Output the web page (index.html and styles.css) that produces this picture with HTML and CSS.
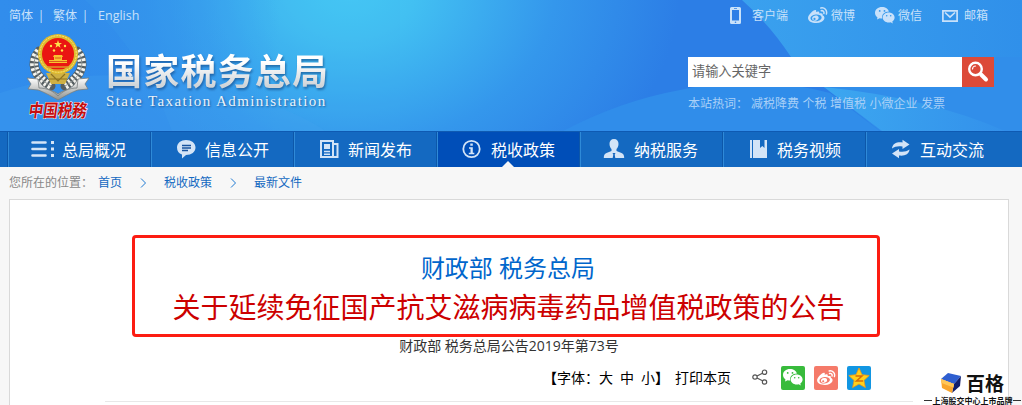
FILE: index.html
```html
<!DOCTYPE html>
<html lang="zh-CN">
  <head>
    <meta charset="utf-8" />
    <title>国家税务总局</title>
    <link rel="stylesheet" href="styles.css">
  </head>
  <body>
    <!-- shared icons -->
    <svg class="sprite" width="0" height="0">
      <symbol id="wechat" viewBox="0 0 20 17">
        <path fill="currentColor" fill-rule="evenodd" d="M7 0C3 0 0 2.600 0 5.900c0 1.900 1 3.400 2.500 4.500L2 12.600l2.600-1.300c.9.200 1.700.3 2.700.3C6.300 7.600 9.500 4.600 14 4.600 13.300 1.900 10.500 0 7 0zM4.700 3a.9.900 0 1 1 0 1.800.9.900 0 0 1 0-1.800zm4.800 0a.9.900 0 1 1 0 1.800.9.900 0 0 1 0-1.800z" />
        <path fill="currentColor" fill-rule="evenodd" d="M13.700 5.500c-3.400 0-6 2.200-6 5s2.600 5 6 5c.7 0 1.400-.1 2-.3l2.100 1.200-.5-1.900c1.400-.9 2.300-2.300 2.300-4 0-2.800-2.600-5-5.900-5zM11.700 8a.8.800 0 1 1 0 1.600.8.800 0 0 1 0-1.600zm4 0a.8.800 0 1 1 0 1.600.8.800 0 0 1 0-1.600z" />
      </symbol>
      <symbol id="weibo" viewBox="0 0 20 17">
        <path fill="currentColor" fill-rule="evenodd" d="M8 5c1.500-.8 3.900-1 3.300 1.600 2.200-.8 4-.2 3.300 1.700 4 1.600 1.500 7.700-6.200 7.700C3.500 16 0 14 0 11 0 7.500 6.500 1.500 8 3.200c.4.500.3 1.100 0 1.800zM7.800 7.500C4.500 7.800 2.300 9.600 2.500 11.600c.2 1.900 2.700 3 5.800 2.700s5.500-2.100 5.300-4.100c-.2-1.900-2.700-3-5.800-2.700z" />
        <path fill="currentColor" fill-rule="evenodd" d="M7.500 8.600c-2.300.2-3.800 1.800-3.300 3.400.4 1.500 2.400 2.100 4.200 1.400 1.900-.7 2.800-2.400 2-3.700-.5-.8-1.600-1.200-2.900-1.100zM6.500 10.800a1.100 1.100 0 1 1 0 2.200 1.100 1.100 0 0 1 0-2.200z" />
        <path fill="none" stroke="currentColor" stroke-width="1.500" stroke-linecap="round" d="M12.800 1c3.700-.8 6.700 2.300 5.600 6M13.200 3.700c1.800-.4 3.200 1 2.700 2.800" />
      </symbol>
    </svg>

    <div class="header">
      <svg class="header-bg" viewBox="0 0 1022 131" preserveAspectRatio="none">
        <defs>
          <radialGradient id="glow" gradientUnits="userSpaceOnUse" cx="0" cy="0" r="1" gradientTransform="translate(350 -12) scale(330 255)">
            <stop offset="0" stop-color="#46cbf5" />
            <stop offset=".2" stop-color="#42c0f2" />
            <stop offset=".62" stop-color="#3497ec" />
            <stop offset="1" stop-color="#2c7ee6" />
          </radialGradient>
          <linearGradient id="leftTint" x1="0" x2="1">
            <stop offset="0" stop-color="#318dec" />
            <stop offset=".35" stop-color="#318dec" stop-opacity=".8" />
            <stop offset="1" stop-color="#318dec" stop-opacity="0" />
          </linearGradient>
          <linearGradient id="beam" x1="0" x2="1">
            <stop offset="0" stop-color="#3aa1ee" />
            <stop offset="1" stop-color="#3090ea" />
          </linearGradient>
          <linearGradient id="facet" x1="0" x2="1">
            <stop offset="0" stop-color="#3ca7f0" />
            <stop offset="1" stop-color="#3391eb" />
          </linearGradient>
        </defs>
        <rect width="1022" height="131" fill="url(#glow)" />
        <rect width="280" height="131" fill="url(#leftTint)" />
        <path d="M85 0H400V131H172Q145 55 85 0z" fill="#42b0f0" opacity=".12" />
        <path d="M0 93Q90 62 200 85Q290 105 325 131H0z" fill="#42a5ef" opacity=".25" />
        <path d="M563 131Q620 101 680 90Q755 73 830 93L880 131z" fill="#308dea" />
        <path d="M742 0H1022V131H900L824 87L791 57Q770 25 742 0z" fill="url(#beam)" />
        <path d="M791 57H1022V131H880L824 87z" fill="#318eea" />
        <path d="M824 87Q930 98 1005 131H882z" fill="url(#facet)" />
      </svg>

      <div class="topbar">
        <div class="lang">
          <a>简体</a><i>|</i><a>繁体</a><i>|</i><a class="eng">English</a>
        </div>
        <div class="top-links">
          <a class="client">
            <svg width="12" height="18" viewBox="0 0 12 18"><path fill="currentColor" fill-rule="evenodd" d="M1.500 0h8A1.500 1.500 0 0 1 11 1.500v14a1.500 1.500 0 0 1-1.500 1.500h-8A1.500 1.500 0 0 1 0 15.500v-14A1.500 1.500 0 0 1 1.500 0zM2 3v10.500h7V3zM4 1.200v.7h3v-.7zM5.500 14.500a.8.800 0 1 0 0 1.600.8.800 0 0 0 0-1.600z" /></svg>
            客户端
          </a>
          <a class="weibo"><svg width="20" height="17"><use href="#weibo" /></svg>微博</a>
          <a class="wechat"><svg width="20" height="17"><use href="#wechat" /></svg>微信</a>
          <a class="mail">
            <svg width="16" height="12" viewBox="0 0 16 12"><path fill="none" stroke="currentColor" stroke-width="1.700" d="M.9.9h14.200v10.200H.9zM3 2.500l5 4.700 5-4.700" /></svg>
            邮箱
          </a>
        </div>
      </div>

      <div class="banner">
        <div class="brand">
          <svg class="emblem" width="66" height="96" viewBox="0 0 66 96">
            <defs>
              <linearGradient id="silver" x1="0" x2="0" y1="0" y2="1">
                <stop offset="0" stop-color="#fff" />
                <stop offset="1" stop-color="#8d918f" />
              </linearGradient>
            </defs>
            <!-- wheat -->
            <g fill="none" stroke-linecap="round">
              <path d="M14 18C5 29 8 43 26 53M52 18c9 11 6 25-12 35" stroke="#555e61" stroke-width="9" />
              <path d="M14 18C5 29 8 43 26 53M52 18c9 11 6 25-12 35" stroke="#f3f3ee" stroke-width="8" stroke-dasharray="2.500 2" stroke-linecap="butt" />
              <path d="M14 18C5 29 8 43 26 53M52 18c9 11 6 25-12 35" stroke="#8b9191" stroke-width="1" />
            </g>
            <path d="M21 40h24l-5 11H26z" fill="#cdb045" />
            <path d="M26 41l7 7 7-7M24 46h18" stroke="#8e7320" stroke-width="1.200" fill="none" />
            <!-- ribbon -->
            <path d="M2 45l11 1 4 6c7 6 11 5 16 9 5-4 9-3 16-9l4-6 11-1-4 6 3 5-10 1C47 59 42 62 33 67 24 62 19 59 13 57L3 56l3-5z" fill="url(#silver)" stroke="#777d7e" stroke-width=".8" />
            <path d="M13 46l1 9c8 0 14 3 19 8 5-5 11-8 19-8l1-9" fill="none" stroke="#777d7e" stroke-width=".8" />
            <circle cx="33" cy="21" r="20" fill="#dfba2c" />
            <circle cx="33" cy="21" r="18.300" fill="none" stroke="#fae783" stroke-width="1" stroke-dasharray="2 1" />
            <circle cx="33" cy="21" r="16" fill="#ea1512" />
            <g fill="#ffe34c">
              <path d="M33 7l1 3h3l-2.400 1.800.9 3L33 13l-2.500 1.800.9-3L29 10h3z" />
              <circle cx="26" cy="13" r="1.200" /><circle cx="40" cy="13" r="1.200" />
              <circle cx="29" cy="17.500" r="1.200" /><circle cx="37" cy="17.500" r="1.200" />
            </g>
            <path d="M29 22h8l1 2h-1v3h5v3H24v-3h5v-3h-1z" fill="#f9c32f" />
            <path d="M24 28.500h18M30 25h6" stroke="#db5b1d" stroke-width="1" />
            <path d="M22 34h22M28 37h10" stroke="#e0982a" stroke-width="1.600" />
            <text class="script" transform="translate(3 84) skewX(-8)" textLength="58" lengthAdjust="spacingAndGlyphs">中国税務</text>
          </svg>
          <div class="brand-name">
            <div class="cn">国家税务总局</div>
            <div class="en">State Taxation Administration</div>
          </div>
        </div>

        <div class="search">
          <div class="search-box">
            <div class="field">请输入关键字</div>
            <div class="search-btn">
              <svg width="22" height="22" viewBox="0 0 22 22" fill="none" stroke="#fff" stroke-linecap="round"><circle cx="8.500" cy="8" r="6.300" stroke-width="2.400" /><path d="M5.500 8a3 3 0 0 1 3-3" stroke-width="1.200" /><path d="M14 13.500l5 5" stroke-width="4" /></svg>
            </div>
          </div>
          <div class="hot"><span>本站热词：</span><a>减税降费</a><a>个税</a><a>增值税</a><a>小微企业</a><a>发票</a></div>
        </div>
      </div>
    </div>

    <div class="nav">
      <a><svg viewBox="0 0 24 20"><path fill="none" stroke="currentColor" stroke-width="2.600" stroke-linecap="round" d="M1.500 3.500h13M1.500 10h13M1.500 16.500h13" /><path fill="currentColor" d="M20 2h3v3h-3zM20 8.500h3v3h-3zM20 15h3v3h-3z" /></svg>总局概况</a>
      <a><svg viewBox="0 0 24 20"><path fill="currentColor" d="M12 1c5.500 0 9.500 3 9.500 7.500S17.500 16 12 16l-4 3.500V15.500C4.800 14.500 3 12 3 8.500 3 4 7 1 12 1z" /><path stroke="#17539f" stroke-width="1.300" d="M8 6.500h9M8 9h9M8 11.500h6" /></svg>信息公开</a>
      <a><svg viewBox="0 0 24 20"><path fill="none" stroke="currentColor" stroke-width="2" d="M4 2h12v16H4zM16 5h4.500v13H15" /><path fill="currentColor" d="M7 5h6v5H7zM7 11.700h6v1.500H7zM7 14.600h6v1.400H7z" /></svg>新闻发布</a>
      <a class="active"><svg viewBox="0 0 24 20"><circle cx="11.500" cy="10" r="8.200" fill="none" stroke="currentColor" stroke-width="1.800" /><path fill="currentColor" d="M10.300 4.500h2.500v2.300h-2.500zM9 8.300h3.800v5.500h1.500v1.500H8.800v-1.500h1.700v-4H9z" /></svg>税收政策</a>
      <a><svg viewBox="0 0 24 20"><path fill="currentColor" d="M11 0c3 0 4.600 2 4.500 5-.1 2.500-1 4-2 5v2l5 2c2 .8 2.700 2.500 2.700 5H.8c0-2.500.7-4.200 2.700-5l5-2v-2c-1-1-1.900-2.500-2-5C6.400 2 8 0 11 0z" /><path fill="#1465bd" d="M9.500 14h3l-.8 1.500.6 3.500h-2.600l.6-3.500z" /></svg>纳税服务</a>
      <a><svg viewBox="0 0 24 20"><path fill="currentColor" d="M4 1h2v18H4zM7 1h7v8l2.300-2L18.500 9V1H21v18H7z" /></svg>税务视频</a>
      <a><svg viewBox="0 0 24 20"><path fill="currentColor" d="M3 9.500C3.500 4.500 8 2.800 13.500 3.500V.8l7 4.700-7 4.500V7.500C9 6.800 6 7.500 3 9.500zM20.500 10.500c-.5 5-5 6.700-10.500 6v2.700l-7-4.700L10 10v2.500c4.500.7 7.500 0 10.500-2z" /></svg>互动交流</a>
    </div>

    <div class="crumbs">
      <span>您所在的位置：</span>
      <a>首页</a>
      <svg width="7" height="10"><path d="M1 .5L5.500 5 1 9.500" /></svg>
      <a>税收政策</a>
      <svg width="7" height="10"><path d="M1 .5L5.500 5 1 9.500" /></svg>
      <a>最新文件</a>
    </div>

    <div class="article">
      <div class="title-box">
        <div class="issuer">财政部 税务总局</div>
        <div class="title">关于延续免征国产抗艾滋病病毒药品增值税政策的公告</div>
      </div>
      <div class="doc-no">财政部 税务总局公告2019年第73号</div>
      <div class="tools">
        <div class="font-size"><b>【</b>字体：<a>大</a><a>中</a><a>小</a><b>】</b></div>
        <a class="print">打印本页</a>
        <svg class="share" width="17" height="17" viewBox="0 0 17 17"><path d="M5 7l6-3M5 9l6 3" /><circle cx="3" cy="8" r="2.200" /><circle cx="12.500" cy="3.200" r="2.200" /><circle cx="12.500" cy="13" r="2.200" /></svg>
        <div class="share-btn green"><svg width="20" height="17"><use href="#wechat" /></svg></div>
        <div class="share-btn red"><svg width="19" height="16"><use href="#weibo" /></svg></div>
        <div class="share-btn blue">
          <svg width="24" height="24" viewBox="0 0 24 24"><path d="M12 2l3 6.700 7.200.8-5.300 4.900 1.500 7.200L12 18l-6.400 3.600 1.500-7.200L1.800 9.500 9 8.700z" fill="#ffd11c" stroke="#f39a13" stroke-width=".8" /><path d="M8.500 10h6.500l-5.500 5h6.500" fill="none" stroke="#d56b0b" stroke-width="1.500" /></svg>
        </div>
      </div>
    </div>

    <div class="watermark">
      <div class="wm-logo">
        <svg width="22" height="22" viewBox="0 0 22 22"><path d="M8 1l13 3-7 8L1 7z" fill="#2f5fd0" /><path d="M21 4l-1 10-8 7 2-9z" fill="#101e6c" /><path d="M1 7l13 5-2 9-10-5z" fill="#f9a52c" /><path d="M1 7l13 5-.7 3.500L1.500 11z" fill="#ffc657" /></svg>
        <span>百格</span>
      </div>
      <div class="wm-text">上海股交中心上市品牌</div>
    </div>
  </body>
</html>
```
FILE: styles.css
```css
* {
  box-sizing: border-box;
}
body {
  margin: 0;
  height: 405px;
  overflow: hidden;
  display: flex;
  flex-direction: column;
  background: #f7f7f7;
  font-family: "Open Sans", "Noto Sans CJK SC", sans-serif;
  font-size: 12px;
  line-height: 18px;
  position: relative;
}
svg {
  display: block;
  flex: none;
}
.sprite {
  position: absolute;
}

/* header */
.header {
  height: 131px;
  flex: none;
  position: relative;
  z-index: 0;
  background: #318dea;
}
.header-bg {
  position: absolute;
  z-index: -1;
  left: 0;
  top: 0;
  width: 100%;
  height: 131px;
}
.topbar {
  height: 31px;
  padding: 0 33px 0 9px;
  display: flex;
  justify-content: space-between;
  align-items: center;
  color: #c8e1fa;
}
.lang {
  display: flex;
}
.lang i {
  font-style: normal;
  width: 20px;
  text-align: center;
  padding-right: 4px;
}
.lang .eng {
  font-size: 12.500px;
  margin-left: 1px;
}
.top-links {
  display: flex;
}
.top-links a {
  display: flex;
  align-items: center;
  gap: 3px;
}
.top-links .client {
  gap: 10px;
}
.top-links .weibo {
  margin-left: 20px;
}
.top-links .wechat {
  margin-left: 20px;
}
.top-links .mail {
  margin-left: 20px;
  gap: 6px;
  margin-right: 1px;
}
.banner {
  display: flex;
  justify-content: space-between;
  padding: 0 28px 0 25px;
}
.brand {
  display: flex;
}
.emblem {
  margin-top: 2px;
}
.script {
  font: 700 18px "Noto Sans CJK SC", sans-serif;
  fill: #c60d0f;
  stroke: #fff;
  stroke-width: 1px;
  paint-order: stroke;
}
.brand-name {
  padding: 15px 0 0 15px;
}
.cn {
  font: 700 36px/47px "Noto Sans CJK SC", sans-serif;
  letter-spacing: 1.2px;
  white-space: nowrap;
  background: linear-gradient(#fff 35%, #cfd4d8 85%);
  -webkit-background-clip: text;
  background-clip: text;
  color: transparent;
  filter: drop-shadow(1px 2px 1px rgba(20, 70, 130, 0.6));
}
.en {
  font: 15px/17px "Liberation Serif", serif;
  letter-spacing: 1.42px;
  white-space: nowrap;
  color: #e9f2fa;
  text-shadow: 1px 1px 2px #1b5d9f;
}
.search {
  padding-top: 26px;
}
.search-box {
  display: flex;
  height: 30px;
  width: 306px;
}
.field {
  flex: 1;
  background: #fff;
  color: #666;
  font-size: 13.200px;
  line-height: 28px;
  padding-left: 4px;
}
.search-btn {
  width: 32px;
  background: #dc4a38;
  display: flex;
  align-items: center;
  justify-content: center;
}
.hot {
  display: flex;
  gap: 3.500px;
  margin-top: 8px;
  color: #a9d0f7;
  white-space: nowrap;
}
.hot span {
  width: 59.500px;
}

/* main menu */
.nav {
  display: flex;
  height: 36px;
  flex: none;
  padding-left: 8px;
  background: #1469c1;
  border-top: 1px solid #0f5ab2;
}
.nav a {
  width: 143px;
  height: 35px;
  display: flex;
  align-items: center;
  gap: 7px;
  padding: 1px 0 0 22px;
  border-left: 1px solid #2f8ad8;
  box-shadow: -1px 0 #0d57a9;
  color: #fff;
  font-size: 16px;
  position: relative;
}
.nav svg {
  width: 24px;
  height: 20px;
  color: #d3e4f7;
  margin-top: -3px;
}
.nav .active {
  background: #004eb8;
}
.nav .active::after {
  content: "";
  position: absolute;
  left: 64px;
  bottom: 0;
  border: 6px solid transparent;
  border-top: 0;
  border-bottom-color: #f7f7f7;
}

.crumbs {
  height: 32px;
  flex: none;
  display: flex;
  align-items: center;
  padding-left: 9px;
  color: #888;
}
.crumbs span {
  width: 89px;
}
.crumbs a {
  color: #1469c1;
}
.crumbs svg {
  margin: 0 17px 0 18px;
  fill: none;
  stroke: #1c79d2;
}

/* article */
.article {
  width: 1000px;
  flex: 1;
  margin-left: 9px;
  padding-top: 35px;
  border: 1px solid #d9d9d9;
  border-bottom: 0;
  background: #fff;
}
.title-box {
  width: 748px;
  height: 102px;
  margin-left: 122px;
  padding-top: 12px;
  border: 3px solid #fc1c12;
  border-radius: 4px;
  text-align: center;
  white-space: nowrap;
}
.issuer {
  font-size: 24px;
  line-height: 36px;
  padding-left: 4px;
  color: #06c;
}
.title {
  font-size: 28px;
  line-height: 42px;
  padding-left: 5px;
  color: #c00;
}
.doc-no {
  width: 748px;
  margin-left: 125px;
  font-size: 14px;
  line-height: 18px;
  text-align: center;
  color: #333;
}
.tools {
  width: 808px;
  height: 47px;
  margin-left: 95px;
  padding: 0 42px 1px 0;
  border-bottom: 1px solid #e8e8e8;
  display: flex;
  align-items: center;
  justify-content: flex-end;
  font-size: 14px;
  color: #000;
}
.font-size {
  display: flex;
}
.font-size a {
  width: 21px;
}
.font-size a:nth-of-type(3) {
  width: 14px;
}
.print {
  margin: 0 21px 0 6px;
}
.share {
  fill: none;
  stroke: #555;
  stroke-width: 1.200;
  margin-right: 12px;
}
.share-btn {
  width: 24px;
  height: 24px;
  border-radius: 2px;
  display: flex;
  align-items: center;
  justify-content: center;
  color: #fff;
}
.share-btn + .share-btn {
  margin-left: 9px;
}
.green {
  background: #38bb3c;
}
.red {
  background: #f57a69;
}
.blue {
  background: #1296e2;
  margin-top: 1px;
}

/* corner badge */
.watermark {
  position: absolute;
  right: 1px;
  bottom: 0;
  width: 97px;
  color: #111;
}
.wm-logo {
  display: flex;
  align-items: center;
  gap: 4px;
  padding-left: 16px;
  height: 22px;
  font: bold 19px/22px "Noto Sans CJK SC", sans-serif;
}
.wm-text {
  display: flex;
  align-items: center;
  justify-content: space-between;
  font: bold 8px/10px "Noto Sans CJK SC", sans-serif;
  white-space: nowrap;
  height: 9px;
  margin-top: 2px;
}
.wm-text::before,
.wm-text::after {
  content: "";
  width: 8px;
  height: 1px;
  background: #333;
}
```
